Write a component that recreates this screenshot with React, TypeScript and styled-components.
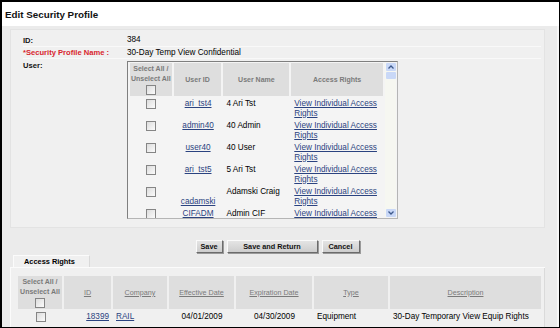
import React from "react";
import styled, { createGlobalStyle, css } from "styled-components";

const GlobalStyle = createGlobalStyle`
  html, body {
    margin: 0;
    padding: 0;
    background: #fff;
  }
  body {
    font-family: "Liberation Sans", Arial, sans-serif;
    font-size: 8.2px;
    color: #000;
  }
`;

const Frame = styled.div`
  box-sizing: border-box;
  width: 560px;
  height: 328px;
  border: 1px solid #000;
  border-top-width: 2px;
  border-left-width: 2px;
  display: flex;
  flex-direction: column;
  background: #fff;
  overflow: hidden;
`;

const Title = styled.h1`
  margin: 0;
  height: 24px;
  padding-left: 3px;
  display: flex;
  align-items: center;
  font-size: 9.8px;
  font-weight: bold;
  color: #111;
`;

const Content = styled.div`
  flex: 1;
  background: #ebebeb;
  padding: 3px 12px 0 8px;
  display: flex;
  flex-direction: column;
  border-right: 2px solid #f6f6f6;
`;

const FormPanel = styled.div`
  background: #f0f0f0;
  border: 1px solid #e3e3e3;
  padding: 4px 3px 8px 12px;
`;

const FormRow = styled.div`
  display: grid;
  grid-template-columns: 104px 1fr;
  line-height: 11px;
  border-bottom: 1px solid #f9f9f9;
  &:last-child {
    border-bottom: none;
  }
`;

const Label = styled.div<{ $required?: boolean }>`
  font-weight: bold;
  font-size: 7.6px;
  color: ${(p) => (p.$required ? "#d8262e" : "#111")};
  padding-top: ${(p) => (p.$required ? 0 : 1)}px;
`;

const Value = styled.div`
  font-size: 8.2px;
`;

const ListBox = styled.div`
  margin-top: 2px;
  width: 271px;
  height: 158px;
  box-sizing: border-box;
  border: 1px solid #7f7f7f;
  border-right-color: #b5b5b5;
  border-bottom-color: #b5b5b5;
  background: #f4f4f4;
  display: flex;
  overflow: hidden;
`;

const ListScroll = styled.div`
  flex: 1;
  overflow: hidden;
`;

const Table = styled.table`
  border-collapse: separate;
  border-spacing: 2px 1px;
  line-height: 9.5px;
`;

const HeadCell = styled.th<{ $w: number; $link?: boolean }>`
  width: ${(p) => p.$w}px;
  background: #dedede;
  color: #7a7a7a;
  font-size: 7px;
  font-weight: bold;
  text-align: center;
  vertical-align: middle;
  padding: 1px 0;
  ${(p) =>
    p.$link &&
    css`
      text-decoration: underline;
      font-weight: normal;
      font-size: 7.2px;
    `}
`;

const Cell = styled.td<{ $align?: string; $valign?: string }>`
  text-align: ${(p) => p.$align || "left"};
  vertical-align: ${(p) => p.$valign || "top"};
  padding: 2px 2px 0 3px;
  font-size: 8.2px;
  white-space: nowrap;
`;

const WrapCell = styled(Cell)`
  white-space: normal;
`;

const Link = styled.a`
  color: #2b4380;
  text-decoration: underline;
  cursor: pointer;
`;

const Check = styled.span`
  display: inline-block;
  width: 8px;
  height: 8px;
  border: 1px solid #858585;
  background: linear-gradient(135deg, #dcdcdc, #fbfbfb);
  vertical-align: middle;
`;

const HeadCheck = styled(Check)`
  margin-top: 2px;
`;

const Scrollbar = styled.div`
  width: 11px;
  margin: 1px 1px 1px 0;
  background: #f6f7f1;
  display: flex;
  flex-direction: column;
  align-items: center;
`;

const ScrollArrow = styled.div`
  width: 10px;
  height: 8px;
  background: #c9d8f7;
  border-radius: 1px;
  display: flex;
  align-items: center;
  justify-content: center;
`;

const Thumb = styled.div`
  width: 10px;
  height: 7px;
  margin-top: 1px;
  background: #c9d8f7;
  border-radius: 1px;
  flex: none;
`;

const Spacer = styled.div`
  flex: 1;
`;

const ButtonBar = styled.div`
  display: flex;
  justify-content: center;
  gap: 4px;
  padding: 12px 0 2px;
`;

const Button = styled.button<{ $w: number }>`
  width: ${(p) => p.$w}px;
  height: 13px;
  padding: 0;
  font-family: "Liberation Sans", Arial, sans-serif;
  font-size: 7.3px;
  font-weight: bold;
  color: #111;
  background: linear-gradient(#e4e4e4, #cdcdcd);
  border: 1px solid #fafafa;
  border-right-color: #6b6b6b;
  border-bottom-color: #6b6b6b;
  box-shadow: 1px 1px 0 #9a9a9a;
  line-height: 11px;
`;

const TabStrip = styled.div`
  display: flex;
  padding-left: 3px;
  border-bottom: 1px solid #fbfbfb;
`;

const Tab = styled.div`
  width: 77px;
  height: 12px;
  box-sizing: border-box;
  padding-left: 10px;
  font-size: 7.4px;
  font-weight: bold;
  line-height: 12px;
  background: #f0f0f0;
  border: 1px solid #fbfbfb;
  border-bottom: none;
  border-right-color: #d9d9d9;
`;

const BottomPanel = styled.div`
  flex: 1;
  background: #f0f0f0;
  border-left: 1px solid #fbfbfb;
  border-right: 1px solid #dadada;
  padding: 7px 0 0 5px;
`;

const BottomTable = styled(Table)`
  border-spacing: 2px 1px;
`;

const Chevron = ({ up }: { up?: boolean }) => (
  <svg width="6" height="4" viewBox="0 0 6 4">
    <polyline
      points={up ? "0.5,3.5 3,1 5.5,3.5" : "0.5,0.5 3,3 5.5,0.5"}
      fill="none"
      stroke="#3e5a8c"
      strokeWidth="1.3"
    />
  </svg>
);

interface User {
  id: string;
  name: string;
  drop?: boolean;
}

const users: User[] = [
  { id: "ari_tst4", name: "4 Ari Tst" },
  { id: "admin40", name: "40 Admin" },
  { id: "user40", name: "40 User" },
  { id: "ari_tst5", name: "5 Ari Tst" },
  { id: "cadamski", name: "Adamski Craig", drop: true },
  { id: "CIFADM", name: "Admin CIF" },
];

export default function App() {
  return (
    <>
      <GlobalStyle />
      <Frame>
        <Title>Edit Security Profile</Title>
        <Content>
          <FormPanel>
            <FormRow>
              <Label>ID:</Label>
              <Value>384</Value>
            </FormRow>
            <FormRow>
              <Label $required>*Security Profile Name :</Label>
              <Value>30-Day Temp View Confidential</Value>
            </FormRow>
            <FormRow>
              <Label>User:</Label>
              <div>
                <ListBox>
                  <ListScroll>
                    <Table>
                      <thead>
                        <tr>
                          <HeadCell $w={42}>
                            Select All /<br />
                            Unselect All
                            <br />
                            <HeadCheck />
                          </HeadCell>
                          <HeadCell $w={48}>User ID</HeadCell>
                          <HeadCell $w={66}>User Name</HeadCell>
                          <HeadCell $w={93}>Access Rights</HeadCell>
                        </tr>
                      </thead>
                      <tbody>
                        {users.map((u) => (
                          <tr key={u.id}>
                            <Cell $align="center">
                              <Check />
                            </Cell>
                            <Cell $align="center" $valign={u.drop ? "bottom" : "top"}>
                              <Link>{u.id}</Link>
                            </Cell>
                            <Cell>{u.name}</Cell>
                            <WrapCell>
                              <Link>View Individual Access Rights</Link>
                            </WrapCell>
                          </tr>
                        ))}
                      </tbody>
                    </Table>
                  </ListScroll>
                  <Scrollbar>
                    <ScrollArrow>
                      <Chevron up />
                    </ScrollArrow>
                    <Thumb />
                    <Spacer />
                    <ScrollArrow>
                      <Chevron />
                    </ScrollArrow>
                  </Scrollbar>
                </ListBox>
              </div>
            </FormRow>
          </FormPanel>

          <ButtonBar>
            <Button $w={27}>Save</Button>
            <Button $w={91}>Save and Return</Button>
            <Button $w={38}>Cancel</Button>
          </ButtonBar>

          <TabStrip>
            <Tab>Access Rights</Tab>
          </TabStrip>
          <BottomPanel>
            <BottomTable>
              <thead>
                <tr>
                  <HeadCell $w={44}>
                    Select All /<br />
                    Unselect All
                    <br />
                    <HeadCheck />
                  </HeadCell>
                  <HeadCell $w={47} $link>ID</HeadCell>
                  <HeadCell $w={54} $link>Company</HeadCell>
                  <HeadCell $w={65} $link>Effective Date</HeadCell>
                  <HeadCell $w={76} $link>Expiration Date</HeadCell>
                  <HeadCell $w={74} $link>Type</HeadCell>
                  <HeadCell $w={151} $link>Description</HeadCell>
                </tr>
              </thead>
              <tbody>
                <tr>
                  <Cell $align="center">
                    <Check />
                  </Cell>
                  <Cell $align="right">
                    <Link>18399</Link>
                  </Cell>
                  <Cell>
                    <Link>RAIL</Link>
                  </Cell>
                  <Cell $align="center">04/01/2009</Cell>
                  <Cell $align="center">04/30/2009</Cell>
                  <Cell>Equipment</Cell>
                  <Cell>30-Day Temporary View Equip Rights</Cell>
                </tr>
              </tbody>
            </BottomTable>
          </BottomPanel>
        </Content>
      </Frame>
    </>
  );
}
